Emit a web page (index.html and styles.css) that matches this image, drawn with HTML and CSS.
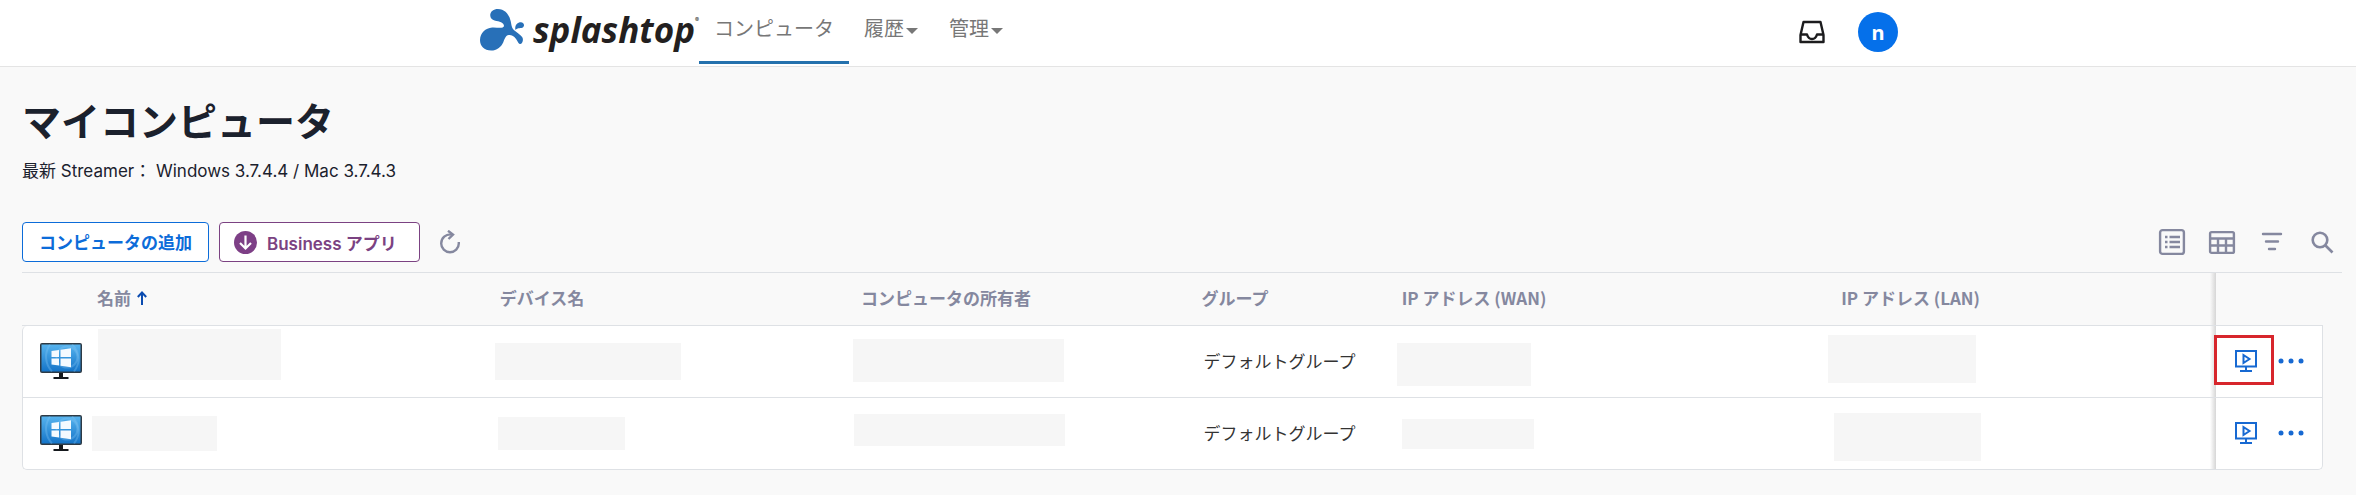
FILE: index.html
```
<!DOCTYPE html>
<html lang="ja">

<head>
  <meta charset="utf-8">
  <meta name="viewport" content="width=device-width, initial-scale=1.0">
  <title>マイコンピュータ - Splashtop</title>
  <link rel="stylesheet" href="styles.css">
</head>

<body>
  <svg class="symbols" aria-hidden="true">
    <defs>
      <linearGradient id="screen" x1="0" y1="0" x2="0" y2="1">
        <stop offset="0" stop-color="#56b3ee" />
        <stop offset="1" stop-color="#1474c8" />
      </linearGradient>
    </defs>
    <symbol id="windows-pc" viewBox="0 0 42 36">
      <rect x="0" y="0" width="42" height="30" rx="2" fill="#2d3a45" />
      <rect x="1.5" y="1.5" width="39" height="27" fill="url(#screen)" />
      <circle cx="27" cy="14" r="10.5" fill="none" stroke="#8ccbf5" stroke-opacity=".3" stroke-width="2" />
      <path d="M10 1.5C4 10 5 21 12 28.5M32 1.5C41 10 40 21 34 28.5" fill="none" stroke="#8ccbf5" stroke-opacity=".3" stroke-width="2" />
      <path d="M11.500 8L19 7v7h-7.500zM20.500 6.700L31 5.300V14H20.500zM11.500 15.500H19v7l-7.500-1zM20.500 15.500H31v8.800l-10.500-1.500z" fill="#f4faff" />
      <path d="M19 30h4v4h5.500v2h-15v-2H19z" fill="#15191d" />
    </symbol>
    <symbol id="remote" viewBox="0 0 22 22">
      <path d="M1 1h20v15.500H1z" fill="none" stroke="#1769d2" stroke-width="2" />
      <path d="M11 16.500V21M5 21h12" fill="none" stroke="#1769d2" stroke-width="2" />
      <path d="M8.500 5v8L14.500 9z" fill="none" stroke="#1769d2" stroke-width="2" />
    </symbol>
    <symbol id="dots" viewBox="0 0 26 6">
      <circle cx="3" cy="3" r="2.500" fill="#1769d2" />
      <circle cx="13" cy="3" r="2.500" fill="#1769d2" />
      <circle cx="23" cy="3" r="2.500" fill="#1769d2" />
    </symbol>
  </svg>

  <header class="topbar">
    <div class="topbar-inner">
      <a class="logo" href="#">
        <svg class="logo-mark" width="47" height="44" viewBox="0 0 141 132">
          <path d="M32 20C32 7 43 0 56 0C78 1 91 16 96 38C99 52 99 59 106 66C115 74 126 80 132 88C138 97 132 110 126 110C121 110 118 101 113 94C107 86 98 81 90 82C80 84 78 93 73 104C66 120 52 130 35 130C13 130 0 116 0 97C1 74 17 60 38 58C51 57 62 61 71 58C79 54 74 46 66 42C57 37 32 39 32 20z" fill="#2870b8" />
          <path d="M111 66C108 53 116 42 128 42C137 42 141 52 135 57C129 62 117 57 111 66z" fill="#2870b8" />
        </svg>
        <span class="logo-text">splashtop</span><span class="logo-reg">®</span>
      </a>
      <nav class="menu">
        <a class="menu-item active" href="#">コンピュータ</a>
        <a class="menu-item" href="#">履歴<i class="caret"></i></a>
        <a class="menu-item" href="#">管理<i class="caret"></i></a>
      </nav>
      <div class="account">
        <button class="icon-button" type="button" aria-label="受信トレイ">
          <svg width="26" height="24" viewBox="0 0 26 24" fill="none" stroke="#1c1c1e" stroke-width="2.400" stroke-linejoin="round">
            <path d="M4.500 2h17l3 13v7h-23v-7z" />
            <path d="M1.500 14.500H8C9 18 11 19 13 19s4-1 5-4.500h6.500" />
          </svg>
        </button>
        <button class="avatar" type="button">n</button>
      </div>
    </div>
  </header>

  <main class="content">
    <h1>マイコンピュータ</h1>
    <p class="streamer">最新 Streamer： Windows 3.7.4.4 / Mac 3.7.4.3</p>

    <div class="toolbar">
      <button class="btn btn-blue" type="button">コンピュータの追加</button>
      <button class="btn btn-purple" type="button">
        <svg width="23" height="23" viewBox="0 0 23 23">
          <circle cx="11.500" cy="11.500" r="11.500" fill="#7d3f86" />
          <path d="M11.500 4.500v13M6 12l5.500 5.500L17 12" fill="none" stroke="#fff" stroke-width="2.200" />
        </svg>
        Business アプリ
      </button>
      <button class="icon-button refresh" type="button" aria-label="更新">
        <svg width="20" height="24" viewBox="0 0 20 24" fill="none" stroke="#85889f" stroke-width="2.400">
          <path d="M12.500 4.500C5.500 3.500 1.200 8 1.200 13.500A8.800 8.800 0 0 0 18.800 13.500V12" />
          <path d="M8 .8l5 3.800L8.500 9" />
        </svg>
      </button>
      <div class="tools">
        <button class="icon-button" type="button" aria-label="リスト表示">
          <svg width="28" height="28" viewBox="0 0 28 28" fill="none" stroke="#85889f" stroke-width="2.400">
            <rect x="2.100" y="2.100" width="23.800" height="23.800" rx="2.500" />
            <path d="M7 9h2.500M7 14h2.500M7 19h2.500M11.500 9H22M11.500 14H22M11.500 19H22" />
          </svg>
        </button>
        <button class="icon-button" type="button" aria-label="列の設定">
          <svg width="28" height="28" viewBox="0 0 28 28" fill="none" stroke="#85889f" stroke-width="2.400">
            <rect x="2.100" y="4.100" width="23.800" height="20.800" rx="1.500" />
            <path d="M2 10.500h24M2 17.500h24M10 10.500V25M18 10.500V25" />
          </svg>
        </button>
        <button class="icon-button" type="button" aria-label="フィルタ">
          <svg width="28" height="28" viewBox="0 0 28 28" fill="none" stroke="#85889f" stroke-width="2.400" stroke-linecap="round">
            <path d="M5 6h18M8 13.500h12M11 21h6" />
          </svg>
        </button>
        <button class="icon-button" type="button" aria-label="検索">
          <svg width="28" height="28" viewBox="0 0 28 28" fill="none" stroke="#85889f" stroke-width="2.600">
            <circle cx="12" cy="12" r="7.300" />
            <path d="M17 17l7.500 7.500" />
          </svg>
        </button>
      </div>
    </div>

    <div class="list">
      <table>
        <colgroup>
          <col class="col-icon">
          <col class="col-name">
          <col class="col-device">
          <col class="col-owner">
          <col class="col-group">
          <col class="col-wan">
          <col>
          <col class="col-actions">
        </colgroup>
        <thead>
          <tr>
            <th></th>
            <th>名前<svg class="sort" width="10" height="14" viewBox="0 0 10 14"><path d="M5 14V2M.8 6L5 1.500 9.200 6" fill="none" stroke="#0b4cb0" stroke-width="2" /></svg></th>
            <th>デバイス名</th>
            <th>コンピュータの所有者</th>
            <th>グループ</th>
            <th>IP アドレス (WAN)</th>
            <th>IP アドレス (LAN)</th>
            <th class="actions"></th>
          </tr>
        </thead>
        <tbody>
          <tr>
            <td class="pc"><svg width="42" height="36"><use href="#windows-pc" /></svg></td>
            <td><span class="mask name-1"></span></td>
            <td><span class="mask device-1"></span></td>
            <td><span class="mask owner-1"></span></td>
            <td>デフォルトグループ</td>
            <td><span class="mask wan-1"></span></td>
            <td><span class="mask lan-1"></span></td>
            <td class="actions">
              <div class="action-buttons">
                <button class="icon-button" type="button" aria-label="接続"><svg width="22" height="22"><use href="#remote" /></svg></button>
                <button class="icon-button" type="button" aria-label="その他"><svg width="26" height="6"><use href="#dots" /></svg></button>
              </div>
              <span class="highlight"></span>
            </td>
          </tr>
          <tr>
            <td class="pc"><svg width="42" height="36"><use href="#windows-pc" /></svg></td>
            <td><span class="mask name-2"></span></td>
            <td><span class="mask device-2"></span></td>
            <td><span class="mask owner-2"></span></td>
            <td>デフォルトグループ</td>
            <td><span class="mask wan-2"></span></td>
            <td><span class="mask lan-2"></span></td>
            <td class="actions">
              <div class="action-buttons">
                <button class="icon-button" type="button" aria-label="接続"><svg width="22" height="22"><use href="#remote" /></svg></button>
                <button class="icon-button" type="button" aria-label="その他"><svg width="26" height="6"><use href="#dots" /></svg></button>
              </div>
            </td>
          </tr>
        </tbody>
      </table>
    </div>
  </main>
</body>

</html>
```
FILE: styles.css
```
* {
  box-sizing: border-box;
}

body {
  margin: 0;
  background-color: #f9f9f9;
  color: #1b212d;
  font-family: Inter, "Noto Sans CJK JP", sans-serif;
  font-size: 17px;
}

svg {
  display: block;
}

.symbols {
  position: absolute;
  width: 0;
  height: 0;
}

button {
  font-family: inherit;
  cursor: pointer;
}

/* top bar */
.topbar {
  background-color: #ffffff;
  border-bottom: 1px solid #e4e4e4;
}

.topbar-inner {
  display: flex;
  max-width: 1440px;
  height: 66px;
  margin: 0 auto;
  padding-left: 22px;
}

.logo {
  display: flex;
  width: 219px;
  padding-top: 8px;
  color: #231f20;
  text-decoration: none;
}

.logo-text {
  margin-left: 8px;
  font-family: "Open Sans", sans-serif;
  font-size: 35px;
  font-style: italic;
  font-weight: 700;
  line-height: 44px;
}

.logo-reg {
  padding-top: 8px;
  font-size: 6px;
}

.menu {
  display: flex;
}

.menu-item {
  display: flex;
  height: 64px;
  padding: 0 15px;
  border-bottom: 3px solid transparent;
  color: #777777;
  font-family: "Noto Sans CJK JP", sans-serif;
  font-size: 20px;
  line-height: 56px;
  text-decoration: none;
}

.menu-item.active {
  border-bottom-color: #2471ad;
}

.caret {
  margin: 28px 1px 0 2px;
  border: 6px solid transparent;
  border-top-color: #777777;
  border-bottom: 0;
  align-self: flex-start;
}

.account {
  display: flex;
  align-items: flex-start;
  gap: 33px;
  margin-left: auto;
  padding-top: 12px;
}

.account .icon-button {
  height: 40px;
}

.icon-button {
  display: flex;
  align-items: center;
  padding: 0;
  border: 0;
  background: none;
}

.avatar {
  width: 40px;
  height: 40px;
  padding: 0;
  border: 0;
  border-radius: 50%;
  background-color: #0570ea;
  color: #ffffff;
  font-family: "Noto Sans", sans-serif;
  font-size: 20px;
  font-weight: 700;
}

/* page */
.content {
  padding: 25px 14px 24px 22px;
}

h1 {
  margin: 0;
  font-size: 39px;
  font-weight: 700;
  line-height: 60px;
}

.streamer {
  margin: 6px 0 0;
  line-height: 26px;
}

.toolbar {
  display: flex;
  align-items: center;
  gap: 10px;
  margin-top: 38px;
  padding-bottom: 10px;
  border-bottom: 1px solid #dee1e5;
}

.btn {
  display: flex;
  align-items: center;
  gap: 10px;
  height: 40px;
  border: 1px solid;
  border-radius: 4px;
  background-color: #ffffff;
  font-size: 17px;
  font-weight: 600;
}

.btn-blue {
  padding: 0 16px 2px;
  color: #0c6cd9;
}

.btn-purple {
  padding: 0 22px 0 14px;
  color: #7b4282;
}

.refresh {
  margin-left: 10px;
}

.tools {
  display: flex;
  gap: 22px;
  margin-left: auto;
  padding-right: 6px;
}

/* computer list */
.list {
  padding-right: 19px;
}

table {
  width: 100%;
  border-collapse: separate;
  border-spacing: 0;
  table-layout: fixed;
}

.col-icon {
  width: 75px;
}

.col-name {
  width: 17.5%;
}

.col-device {
  width: 15.7%;
}

.col-owner {
  width: 14.8%;
}

.col-group {
  width: 8.7%;
}

.col-wan {
  width: 19.1%;
}

.col-actions {
  width: 107px;
}

th {
  height: 53px;
  padding: 0 0 3px;
  border-bottom: 1px solid #dee1e5;
  color: #85889f;
  font-family: "Noto Sans CJK JP", sans-serif;
  font-weight: 700;
  text-align: left;
}

.sort {
  display: inline-block;
  margin-left: 6px;
}

td {
  position: relative;
  height: 72px;
  padding: 0 0 2px 2px;
  border-bottom: 1px solid #dee1e5;
  background-color: #ffffff;
  color: #333333;
}

td.pc {
  padding-left: 17px;
  border-left: 1px solid #dee1e5;
}

td.actions {
  border-right: 1px solid #dee1e5;
}

tbody tr:first-child .pc {
  border-top-left-radius: 5px;
}

tbody tr:last-child .pc {
  border-bottom-left-radius: 5px;
}

tbody tr:last-child .actions {
  border-bottom-right-radius: 5px;
}

.actions {
  position: relative;
  padding-left: 0;
}

td.actions {
  padding-left: 0;
}

.actions::before {
  content: "";
  position: absolute;
  top: 0;
  right: 100%;
  bottom: 0;
  width: 6px;
  background: linear-gradient(to left, #d6d6d6, rgba(214, 214, 214, 0));
}

.action-buttons {
  display: flex;
  align-items: center;
  gap: 21px;
  padding-left: 19px;
}

.highlight {
  position: absolute;
  top: 9px;
  left: -2px;
  width: 60px;
  height: 50px;
  border: 3px solid #d7262c;
  pointer-events: none;
}

/* covers laid over private values */
.mask {
  position: absolute;
  background-color: #f6f6f6;
}

.name-1 {
  top: 3px;
  left: 1px;
  width: 183px;
  height: 51px;
}

.name-2 {
  top: 18px;
  left: -5px;
  width: 125px;
  height: 35px;
}

.device-1 {
  top: 17px;
  left: -5px;
  width: 186px;
  height: 37px;
}

.device-2 {
  top: 19px;
  left: -2px;
  width: 127px;
  height: 33px;
}

.owner-1 {
  top: 13px;
  left: -8px;
  width: 211px;
  height: 43px;
}

.owner-2 {
  top: 16px;
  left: -7px;
  width: 211px;
  height: 32px;
}

.wan-1 {
  top: 17px;
  left: -5px;
  width: 134px;
  height: 43px;
}

.wan-2 {
  top: 21px;
  left: 0;
  width: 132px;
  height: 30px;
}

.lan-1 {
  top: 9px;
  left: -13px;
  width: 148px;
  height: 48px;
}

.lan-2 {
  top: 15px;
  left: -7px;
  width: 147px;
  height: 48px;
}
```
